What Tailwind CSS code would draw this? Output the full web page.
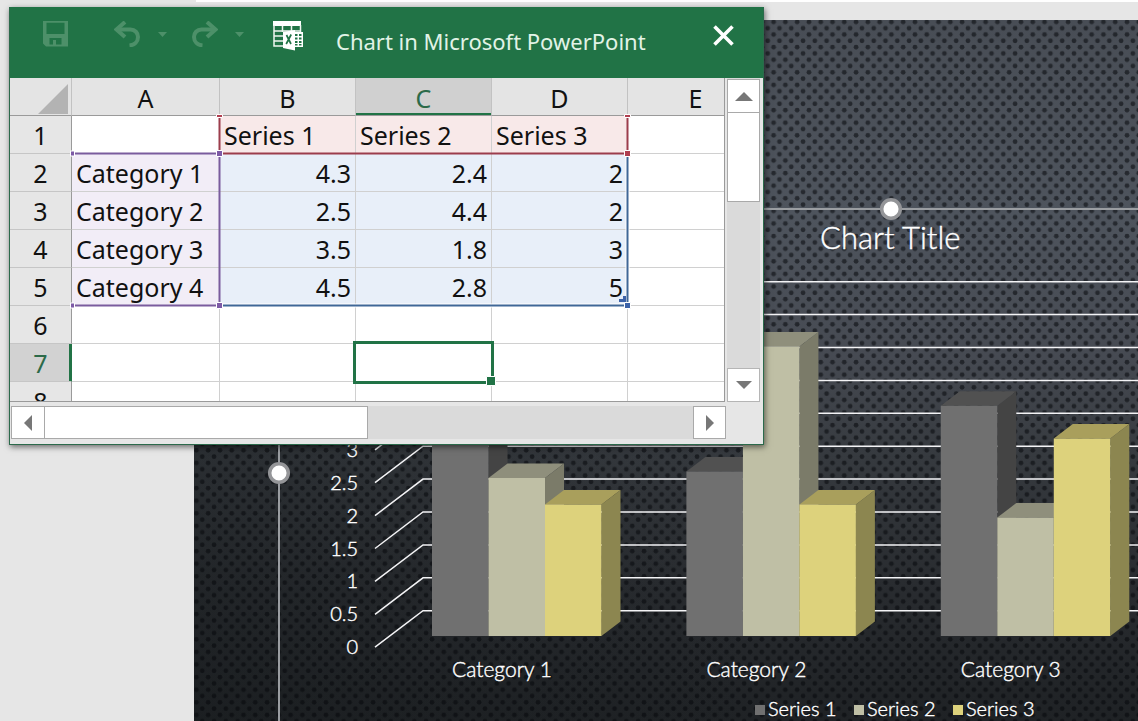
<!DOCTYPE html>
<html lang="en">
<head>
    <meta charset="UTF-8">
    <meta name="viewport" content="width=device-width, initial-scale=1.0">
    <title>Chart in Microsoft PowerPoint</title>
    <script src="https://cdn.jsdelivr.net/npm/@tailwindcss/browser@4"></script>
</head>
<body class="relative flex h-screen flex-col overflow-hidden bg-[#e6e6e6]">

    <div class="ml-[196px] h-[2px] shrink-0 bg-white"></div>

    <!-- Slide with the 3D column chart -->
    <main class="mt-[18px] ml-[194px] min-h-0 flex-1 bg-[#2a2d31]">
        <svg class="block h-full w-full font-['Lato',sans-serif] font-light" viewBox="194 20 944 701" preserveAspectRatio="xMinYMin slice" role="img" aria-label="Column chart">
            <defs>
                <linearGradient id="bg" x1="0" y1="0" x2="0" y2="1">
                    <stop offset="0" stop-color="#484d55"/>
                    <stop offset="0.28" stop-color="#4e545d"/>
                    <stop offset="0.48" stop-color="#464a52"/>
                    <stop offset="0.62" stop-color="#363a3f"/>
                    <stop offset="0.8" stop-color="#292c30"/>
                    <stop offset="1" stop-color="#1f2225"/>
                </linearGradient>
                <linearGradient id="side" x1="0" y1="0" x2="1" y2="0">
                    <stop offset="0" stop-color="#14181a" stop-opacity="0.35"/>
                    <stop offset="0.6" stop-color="#14181a" stop-opacity="0"/>
                </linearGradient>
                <pattern id="dots" x="770.6" y="182.6" width="11.78" height="12.6" patternUnits="userSpaceOnUse">
                    <g fill="#05080b" fill-opacity="0.55">
                        <circle cx="3" cy="3.1" r="2.4"/>
                        <circle cx="8.9" cy="9.4" r="2.4"/>
                    </g>
                </pattern>
            </defs>
            <rect x="194" y="20" width="944" height="701" fill="url(#bg)"/>
            <rect x="194" y="20" width="944" height="701" fill="url(#side)"/>
            <rect x="194" y="20" width="944" height="701" fill="url(#dots)"/>

            <g id="grid" stroke="#f4f4f6" stroke-width="1.5" fill="none"></g>
            <g id="bars"></g>
            <g fill="#fff" stroke="#fff" stroke-width="0.4">
                <g id="axis" font-size="20" text-anchor="end"></g>
                <g id="categories" font-size="21" text-anchor="middle"></g>
                <text x="820" y="249" font-size="31">Chart Title</text>
            </g>

            <g fill="#707070">
                <rect x="755" y="705" width="10" height="10"/>
                <rect x="854" y="705" width="10" height="10" fill="#bfbfa5"/>
                <rect x="953" y="705" width="10" height="10" fill="#ddd27c"/>
            </g>
            <g fill="#fff" stroke="#fff" stroke-width="0.4" font-size="20">
                <text x="768" y="716">Series 1</text>
                <text x="867" y="716">Series 2</text>
                <text x="966" y="716">Series 3</text>
            </g>

            <!-- selection frame -->
            <path d="M279 721V209H1138" fill="none" stroke="#9a9da1" stroke-width="2"/>
            <g fill="#fff" stroke="#949598" stroke-width="3.5">
                <circle cx="279" cy="473" r="9.3"/>
                <circle cx="891" cy="209" r="9.3"/>
            </g>
        </svg>
    </main>

    <!-- Data window -->
    <section class="absolute top-[7px] left-[9px] border border-t-0 border-[#2b6a4b] bg-[#e6e6e6] font-['Noto_Sans',sans-serif] shadow-[1px_2px_6px_rgba(0,0,0,0.55)]">
        <header class="flex h-[71px] items-start bg-[#217346] text-[#4d9069]">
            <button class="ml-[33px] h-[54px]" aria-label="Save">
                <svg width="25" height="26" viewBox="0 0 25 26" fill="currentColor">
                    <path fill-rule="evenodd" d="M0 0H25V25.500H3L0 22.500zM3.500 1.500V13H21.500V1.500zM6.500 17V23.500H10V19H13V23.500H18.500V17z"/>
                    <path d="M3 0h19v1.500H3z"/>
                </svg>
            </button>
            <button class="ml-[46px] h-[54px]" aria-label="Undo">
                <svg width="26" height="26" viewBox="0 0 26 26" fill="none" stroke="currentColor" stroke-width="4">
                    <path d="M11 1L2.500 8.500L11 16"/>
                    <path d="M3 8.500h13.500c4.500 0 7.500 3.500 7.500 7.500c0 4.500-3.500 8-8.500 8.500"/>
                </svg>
            </button>
            <button class="ml-[18px] h-[54px]" aria-label="Undo list">
                <svg width="9" height="5" viewBox="0 0 9 5" fill="currentColor"><path d="M0 0h9L4.500 5z"/></svg>
            </button>
            <button class="ml-[25px] h-[54px]" aria-label="Redo">
                <svg width="26" height="26" viewBox="0 0 26 26" fill="none" stroke="currentColor" stroke-width="4">
                    <path d="M15 1L23.500 8.500L15 16"/>
                    <path d="M23 8.500H9.500C5 8.500 2 12 2 16c0 4.500 3.500 8 8.500 8.500"/>
                </svg>
            </button>
            <button class="ml-[17px] h-[54px]" aria-label="Redo list">
                <svg width="9" height="5" viewBox="0 0 9 5" fill="currentColor"><path d="M0 0h9L4.500 5z"/></svg>
            </button>
            <button class="ml-[29px] h-[58px]" aria-label="Edit data in Microsoft Excel">
                <svg width="31" height="30" viewBox="0 0 31 30">
                    <path d="M0 0h28v5H0z" fill="#fff"/>
                    <path d="M1 4v21h10M1 10h27M1 15h10M1 20h10M9.500 5v6M18.500 5v6M27.500 4v8" fill="none" stroke="#eef5f0" stroke-width="1.500"/>
                    <path d="M20 11h10v15H20z" fill="#fff"/>
                    <path d="M22 13h2.500v2H22zM26 13h2.500v2H26zM22 16.500h2.500v2H22zM26 16.500h2.500v2H26zM22 20h2.500v2H22zM26 20h2.500v2H26zM22 23h2.500v1.500H22zM26 23h2.500v1.500H26z" fill="#217346"/>
                    <path d="M10 11l12-2v20.500l-12-2.500z" fill="#fff"/>
                    <path d="M13.500 14l4.500 9M18.200 13.500l-5 9.500" stroke="#217346" stroke-width="1.700"/>
                </svg>
            </button>
            <h1 class="ml-8 flex-1 text-[22px] leading-[68px] whitespace-nowrap text-[#e2f3e7]">Chart in Microsoft PowerPoint</h1>
            <button class="mr-[29px] h-[56px]" aria-label="Close">
                <svg width="21" height="21" viewBox="0 0 21 21" fill="none" stroke="#fff" stroke-width="3.600">
                    <path d="M1.500 1.500l18 18M19.500 1.500l-18 18"/>
                </svg>
            </button>
        </header>

        <div class="flex">
            <div class="relative h-[324px] w-[715px] overflow-hidden border-r border-b border-[#9a9a9a] bg-white">
                <table class="w-[754px] table-fixed border-separate border-spacing-0 text-[25px] leading-[35px] text-[#111]">
                    <colgroup>
                        <col class="w-[62px]">
                        <col class="w-[148px]">
                        <col class="w-[136px]">
                        <col class="w-[136px]">
                        <col class="w-[136px]">
                        <col class="w-[136px]">
                    </colgroup>
                    <thead>
                        <tr class="bg-[#e4e4e4] *:h-[38px] *:border-r *:border-b *:border-r-[#c2c2c2] *:border-b-[#9a9a9a] *:p-0 *:pt-1 *:leading-[33px] *:font-normal">
                            <td>
                                <svg class="ml-7" width="30" height="30" viewBox="0 0 30 30"><path d="M0 30L30 0v30z" fill="#b3b3b3"/></svg>
                            </td>
                            <th scope="col">A</th>
                            <th scope="col">B</th>
                            <th scope="col" class="bg-[#d0d0d0] text-[#2c6a49] shadow-[inset_0_-2px_0_#217346]">C</th>
                            <th scope="col">D</th>
                            <th scope="col">E</th>
                        </tr>
                    </thead>
                    <tbody id="cells"></tbody>
                </table>

                <!-- range outlines -->
                <svg class="pointer-events-none absolute top-0 left-0" width="715" height="324" viewBox="10 78 715 324" fill="none" stroke-width="2">
                    <path d="M220 305.500H627.500V154" stroke="#fff" stroke-width="4"/>
                    <path d="M220 305.500H627.500V154" stroke="#3f6797"/>
                    <path d="M75 153.500H219.500V305.500H75" stroke="#7a5c9e"/>
                    <path d="M219.500 117V153.500H627.500V117" stroke="#9c3d4c"/>
                    <g stroke="#fff" stroke-width="1">
                        <path d="M216.500 150.500h6v6h-6zM216.500 302.500h6v6h-6zM70.500 151h4v5h-4zM70.500 303h4v5h-4z" fill="#7d5aa6"/>
                        <path d="M216.500 114.500h6v3h-6zM624.500 114.500h6v3h-6zM624.500 150.500h6v6h-6z" fill="#b03f50"/>
                        <path d="M624.500 302.500h6v6h-6z" fill="#3c62a8"/>
                    </g>
                    <path d="M619 302v-3h4v-3h3v6z" fill="#3c62a8"/>
                    <path d="M354.500 342.500H492.500V382.500H354.500z" stroke="#217346" stroke-width="3"/>
                    <path d="M486.500 376.500h9v9h-9z" fill="#217346" stroke="#fff" stroke-width="1"/>
                </svg>
            </div>

            <div class="mr-[3px] ml-[2px] flex w-[33px] flex-col bg-[#dadada] pt-px">
                <button class="flex h-[34px] items-center justify-center border border-[#a9a9a9] bg-white" aria-label="Scroll up">
                    <svg width="18" height="9" viewBox="0 0 18 9"><path d="M0 9L9 0l9 9z" fill="#777"/></svg>
                </button>
                <div class="-mt-px h-[90px] border border-[#a9a9a9] bg-white"></div>
                <button class="mt-auto flex h-[34px] items-center justify-center border border-[#b5b5b5] bg-white" aria-label="Scroll down">
                    <svg width="16" height="8" viewBox="0 0 16 8"><path d="M0 0h16L8 8z" fill="#777"/></svg>
                </button>
            </div>
        </div>

        <div class="mt-1 mr-[37px] mb-[5px] ml-px flex h-[33px] bg-[#dadada]">
            <button class="flex w-[34px] items-center justify-center border border-[#a9a9a9] bg-white" aria-label="Scroll left">
                <svg width="8" height="16" viewBox="0 0 8 16"><path d="M8 0v16L0 8z" fill="#777"/></svg>
            </button>
            <div class="-ml-px w-[324px] border border-[#a9a9a9] bg-white"></div>
            <button class="ml-auto flex w-[33px] items-center justify-center border border-[#a9a9a9] bg-white" aria-label="Scroll right">
                <svg width="8" height="16" viewBox="0 0 8 16"><path d="M0 0v16l8-8z" fill="#777"/></svg>
            </button>
        </div>
    </section>

    <script>
        const series = ["Series 1", "Series 2", "Series 3"];
        const data = [
            ["Category 1", 4.3, 2.4, 2],
            ["Category 2", 2.5, 4.4, 2],
            ["Category 3", 3.5, 1.8, 3],
            ["Category 4", 4.5, 2.8, 5],
        ];

        // Sheet rows
        const rows = [["", ...series], ...data];
        let html = "";
        for (let r = 1; r <= 8; r++) {
            const head = r === 7
                ? "bg-[#d2d2d2] text-[#2c6a49] shadow-[inset_-2px_0_0_#217346] border-r-[#217346]"
                : "bg-[#e6e6e6] border-r-[#9a9a9a]";
            html += `<tr><th scope="row" class="h-[38px] border-r border-b border-b-[#c6c6c6] px-0 pt-[2px] pb-0 font-normal ${head}">${r}</th>`;
            for (let c = 0; c < 5; c++) {
                const value = rows[r - 1]?.[c] ?? "";
                let fill = "";
                if (r === 1 && c > 0 && c < 4) fill = "bg-[#f8e9e9]";
                if (r > 1 && r < 6 && c === 0) fill = "bg-[#f2edf7]";
                if (r > 1 && r < 6 && c > 0 && c < 4) fill = "bg-[#e8eff9]";
                const align = typeof value === "number" ? "text-right" : "text-left";
                html += `<td class="h-[38px] border-r border-b border-[#d0d0d0] px-1 pt-[2px] pb-0 whitespace-nowrap ${align} ${fill}">${value}</td>`;
            }
            html += "</tr>";
        }
        document.getElementById("cells").innerHTML = html;

        // Axis and grid lines
        let grid = "", axis = "";
        for (let i = 0; i <= 10; i++) {
            const y = 610.7 - i * 32.9;
            grid += `<path d="M375 ${y + 36.5}L423 ${y}H1138"/>`;
            axis += `<text x="358" y="${y + 43.5}">${i / 2}</text>`;
        }
        document.getElementById("grid").innerHTML = grid;
        document.getElementById("axis").innerHTML = axis;

        // Bars: front, top and side face
        const colors = [
            ["#707070", "#515151", "#444444"],
            ["#bfbfa5", "#8f8f7c", "#7b7b69"],
            ["#ddd27c", "#a99f5c", "#8c8650"],
        ];
        const floor = 636, unit = 65.8, w = 56.5, dx = 19, dy = 14.5;
        let bars = "", labels = "";
        data.slice(0, 3).forEach((row, i) => {
            const start = 432 + i * 254.4;
            colors.forEach(([front, top, side], s) => {
                const x = start + s * w, y = floor - row[s + 1] * unit, x2 = x + w;
                bars += `<path fill="${side}" d="M${x2} ${y}l${dx} ${-dy}V${floor - dy}L${x2} ${floor}z"/>`;
                bars += `<path fill="${top}" d="M${x} ${y}l${dx} ${-dy}h${w}L${x2} ${y}z"/>`;
                bars += `<path fill="${front}" d="M${x} ${y}H${x2}V${floor}H${x}z"/>`;
            });
            labels += `<text x="${start + 70}" y="677">${row[0]}</text>`;
        });
        document.getElementById("bars").innerHTML = bars;
        document.getElementById("categories").innerHTML = labels;
    </script>

</body>
</html>
